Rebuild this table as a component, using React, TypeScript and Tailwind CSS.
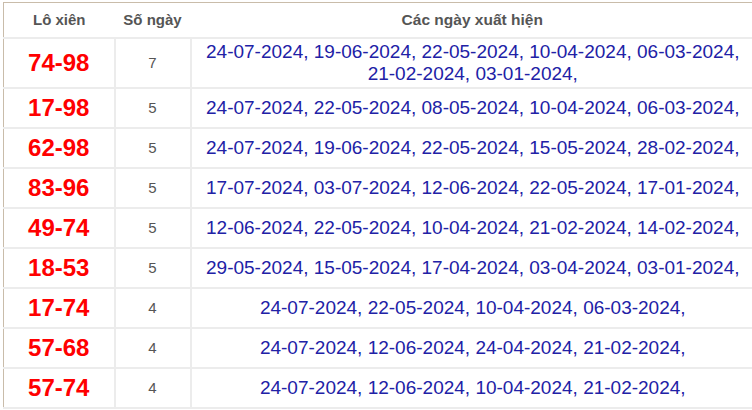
const rows: { pair: string; count: number; dates: string[] }[] = [
  {
    pair: "74-98",
    count: 7,
    dates: ["24-07-2024", "19-06-2024", "22-05-2024", "10-04-2024", "06-03-2024", "21-02-2024", "03-01-2024"],
  },
  { pair: "17-98", count: 5, dates: ["24-07-2024", "22-05-2024", "08-05-2024", "10-04-2024", "06-03-2024"] },
  { pair: "62-98", count: 5, dates: ["24-07-2024", "19-06-2024", "22-05-2024", "15-05-2024", "28-02-2024"] },
  { pair: "83-96", count: 5, dates: ["17-07-2024", "03-07-2024", "12-06-2024", "22-05-2024", "17-01-2024"] },
  { pair: "49-74", count: 5, dates: ["12-06-2024", "22-05-2024", "10-04-2024", "21-02-2024", "14-02-2024"] },
  { pair: "18-53", count: 5, dates: ["29-05-2024", "15-05-2024", "17-04-2024", "03-04-2024", "03-01-2024"] },
  { pair: "17-74", count: 4, dates: ["24-07-2024", "22-05-2024", "10-04-2024", "06-03-2024"] },
  { pair: "57-68", count: 4, dates: ["24-07-2024", "12-06-2024", "24-04-2024", "21-02-2024"] },
  { pair: "57-74", count: 4, dates: ["24-07-2024", "12-06-2024", "10-04-2024", "21-02-2024"] },
];

const App = () => {
  return (
    <main className="w-[752px] h-[410px] overflow-hidden bg-white pl-[3px] pt-[2px] font-['Liberation_Sans',Arial,sans-serif]">
      <table className="w-[752px] border-collapse table-fixed border border-[#c9bcaa]">
        <colgroup>
          <col className="w-[111px]" />
          <col className="w-[76px]" />
          <col />
        </colgroup>
        <thead>
          <tr className="h-[35px] border-b-2 border-[#ececec]">
            <th className="text-[15px] font-bold text-[#555] text-center align-middle">Lô xiên</th>
            <th className="text-[15px] font-bold text-[#555] text-center align-middle">Số ngày</th>
            <th className="text-[15.5px] font-bold text-[#555] text-center align-middle">
              Các ngày xuất hiện
            </th>
          </tr>
        </thead>
        <tbody>
          {rows.map((row) => (
            <tr key={row.pair} className="h-[40px] border-b-2 border-[#ececec]">
              <td className="text-center align-middle text-[24px] font-bold text-[#ff0000] border-r-2 border-[#ececec]">
                {row.pair}
              </td>
              <td className="text-center align-middle text-[15px] text-[#555] border-r-2 border-[#ececec] pt-[2px]">
                {row.count}
              </td>
              <td className="text-center align-middle text-[19px] leading-[22px] text-[#2121a6] py-[2px] px-[12px]">
                {row.dates.map((d) => d + ",").join(" ")}
              </td>
            </tr>
          ))}
        </tbody>
      </table>
    </main>
  );
};

export default App;
